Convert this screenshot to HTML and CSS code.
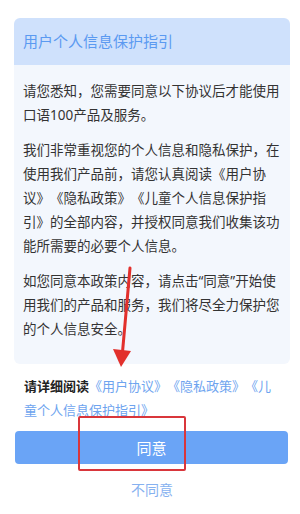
FILE: index.html
```html
<!DOCTYPE html>
<html lang="zh-CN">
<head>
    <meta charset="UTF-8">
    <meta name="viewport" content="width=device-width, initial-scale=1.0">
    <title>用户个人信息保护指引</title>
    <link rel="stylesheet" href="styles.css">
</head>
<body>
    <div class="page">
        <!-- Carte principale -->
        <div class="card">
            <div class="card-head">用户个人信息保护指引</div>
            <div class="card-body">
                <p>请您悉知，您需要同意以下协议后才能使用口语100产品及服务。</p>
                <p>我们非常重视您的个人信息和隐私保护，在使用我们产品前，请您认真阅读《用户协议》《隐私政策》《儿童个人信息保护指引》的全部内容，并授权同意我们收集该功能所需要的必要个人信息。</p>
                <p>如您同意本政策内容，请点击“同意”开始使用我们的产品和服务，我们将尽全力保护您的个人信息安全。</p>
            </div>
        </div>

        <div class="read-tip">
            <b>请详细阅读</b><a href="#">《用户协议》</a><a href="#">《隐私政策》</a><a href="#">《儿童个人信息保护指引》</a>
        </div>

        <button class="btn-agree">同意</button>
        <div class="btn-refuse">不同意</div>

        <!-- Annotations rouges -->
        <svg class="mark-arrow" width="300" height="514" viewBox="0 0 300 514">
            <line x1="130" y1="268" x2="122.5" y2="352" stroke="#e2302c" stroke-width="3" stroke-linecap="round"/>
            <polygon points="113,349 131,351 121,367" fill="#e2302c"/>
        </svg>
        <div class="mark-box"></div>
    </div>
</body>
</html>
```

FILE: styles.css
```css
body {
    margin: 0;
    background: #fff;
    font-family: "Noto Sans", "Noto Sans CJK SC", sans-serif;
    text-spacing-trim: space-all;
}
.page {
    position: relative;
    width: 300px;
    height: 514px;
    padding: 18px 0 0 14px;
    box-sizing: border-box;
}
.card {
    width: 276px;
    border-radius: 6px;
    overflow: hidden;
}
.card-head {
    height: 47px;
    line-height: 47px;
    padding-left: 9px;
    background: #cfe1fc;
    color: #5b9af1;
    font-size: 15px;
}
.card-body {
    padding: 14px 9px 23px;
    background: #f3f7fd;
    color: #333;
    font-size: 13.5px;
}
.card-body p {
    margin: 0 0 11px;
    line-height: 24px;
}
.card-body p:last-child {
    margin-bottom: 0;
}
.read-tip {
    margin-top: 10px;
    padding: 0 8px 0 10px;
    width: 258px;
    font-size: 13px;
    line-height: 24px;
}
.read-tip b {
    color: #222;
}
.read-tip a {
    color: #6ea4ef;
    text-decoration: none;
}
.btn-agree {
    display: block;
    margin: 9px 0 0 1px;
    width: 273px;
    height: 33px;
    border: none;
    border-radius: 4px;
    background: #6aa4f6;
    color: #fff;
    font-family: inherit;
    font-size: 15px;
    padding: 0;
}
.btn-refuse {
    margin-top: 14px;
    width: 276px;
    text-align: center;
    line-height: 24px;
    font-size: 14px;
    color: #86b1f0;
}
.mark-arrow {
    position: absolute;
    top: 0;
    left: 0;
}
.mark-box {
    position: absolute;
    left: 78px;
    top: 416px;
    width: 104px;
    height: 51px;
    border: 2px solid #d9363b;
    border-radius: 2px;
}
```
